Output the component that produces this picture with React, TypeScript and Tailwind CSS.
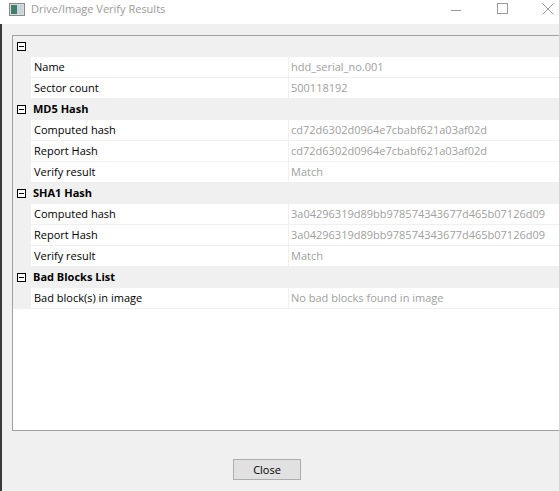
import React from 'react'

type Row = { label: string; value: string }
type Section = { title: string; rows: Row[] }

const sections: Section[] = [
  {
    title: '',
    rows: [
      { label: 'Name', value: 'hdd_serial_no.001' },
      { label: 'Sector count', value: '500118192' },
    ],
  },
  {
    title: 'MD5 Hash',
    rows: [
      { label: 'Computed hash', value: 'cd72d6302d0964e7cbabf621a03af02d' },
      { label: 'Report Hash', value: 'cd72d6302d0964e7cbabf621a03af02d' },
      { label: 'Verify result', value: 'Match' },
    ],
  },
  {
    title: 'SHA1 Hash',
    rows: [
      { label: 'Computed hash', value: '3a04296319d89bb978574343677d465b07126d09' },
      { label: 'Report Hash', value: '3a04296319d89bb978574343677d465b07126d09' },
      { label: 'Verify result', value: 'Match' },
    ],
  },
  {
    title: 'Bad Blocks List',
    rows: [{ label: 'Bad block(s) in image', value: 'No bad blocks found in image' }],
  },
]

function Minus() {
  return (
    <span className="flex h-[9px] w-[9px] shrink-0 items-center justify-center border border-black bg-white">
      <span className="h-px w-[5px] bg-black" />
    </span>
  )
}

function AppIcon() {
  return (
    <svg width="16" height="13" viewBox="0 0 16 13">
      <rect x="0.5" y="0.5" width="15" height="12" fill="#dcdcdc" stroke="#8a8a8a" />
      <rect x="2" y="2" width="6" height="9" fill="#3f7f6c" />
      <rect x="8" y="2" width="6" height="9" fill="#c9d3da" />
    </svg>
  )
}

export default function App() {
  return (
    <div
      className="flex h-[491px] w-[559px] flex-col overflow-hidden bg-[#f0f0f0] text-[11px] text-black"
      style={{ fontFamily: '"Open Sans", "Noto Sans", sans-serif' }}
    >
      {/* title bar */}
      <div className="flex h-[24px] items-center bg-white">
        <div className="ml-[9px] mr-[6px] -mt-[6px]">
          <AppIcon />
        </div>
        <span className="-mt-[6px] text-[11px] text-[#9a9a9a]">Drive/Image Verify Results</span>
        <div className="-mr-[12px] ml-auto flex h-full items-start">
          <div className="flex h-[20px] w-[46px] items-center justify-center">
            <span className="h-px w-[10px] bg-[#9a9a9a]" />
          </div>
          <div className="flex h-[17px] w-[46px] items-center justify-center">
            <span className="h-[11px] w-[11px] border border-[#9a9a9a]" />
          </div>
          <div className="flex h-[17px] w-[46px] items-center justify-center">
            <svg width="12" height="12" viewBox="0 0 12 12">
              <path d="M0.5 0.5 L11.5 11.5 M11.5 0.5 L0.5 11.5" stroke="#9a9a9a" strokeWidth="1" />
            </svg>
          </div>
        </div>
      </div>

      {/* body */}
      <div className="flex flex-1 flex-col border-l-2 border-[#3a3a3a]">
        <div className="ml-[10px] mt-[11px] flex h-[396px] flex-col border border-r-0 border-[#a0a0a0] bg-white">
          {sections.map((s, i) => (
            <div key={i}>
              <div className="flex h-[21px] items-center bg-[#f0f0f0] pl-[4px]">
                <Minus />
                <span className="ml-[7px] font-bold">{s.title}</span>
              </div>
              {s.rows.map((r, j) => (
                <div key={j} className="flex h-[21px] bg-[#f0f0f0]">
                  <div className="w-[18px] shrink-0" />
                  <div className="flex min-w-0 flex-1 border-b border-[#f0f0f0] bg-white">
                    <div className="flex w-[258px] shrink-0 items-center border-r border-[#f0f0f0] pl-[3px]">
                      {r.label}
                    </div>
                    <div className="flex min-w-0 flex-1 items-center whitespace-nowrap pl-[2px] text-[#a0a0a0]">
                      {r.value}
                    </div>
                  </div>
                </div>
              ))}
            </div>
          ))}
        </div>
        <div className="flex flex-1 items-start pl-[231px] pt-[28px]">
          <button className="h-[21px] w-[68px] border border-[#adadad] bg-[#e1e1e1] text-[11px] leading-none text-black">
            Close
          </button>
        </div>
      </div>
    </div>
  )
}
